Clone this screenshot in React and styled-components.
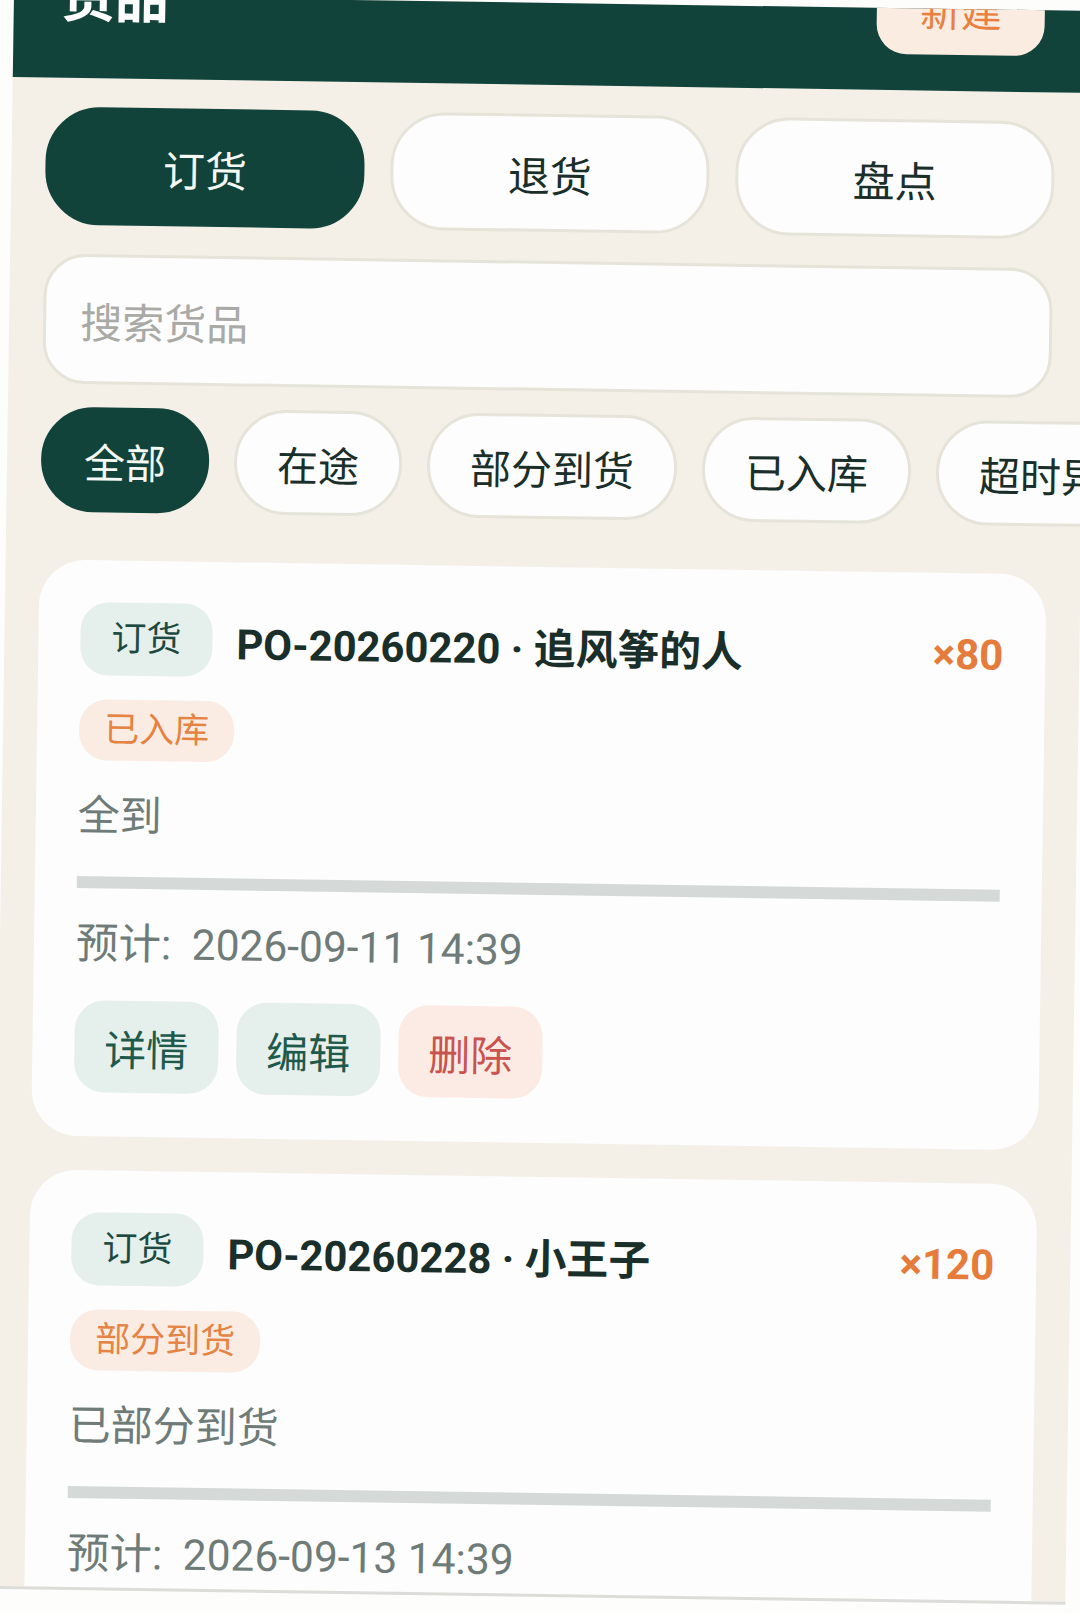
import styled, { createGlobalStyle } from "styled-components";

const GlobalStyle = createGlobalStyle`
  html, body {
    margin: 0;
    height: 100%;
    overflow: hidden;
    background: #fdfdfc;
  }
  * {
    box-sizing: border-box;
  }
`;

const Screen = styled.div`
  display: flex;
  flex-direction: column;
  width: 1075px;
  height: 1701px;
  margin: -5px 0 0 14px;
  background: #f4f0e8;
  color: #1a2e2a;
  font-family: Roboto, "Noto Sans CJK SC", sans-serif;
  transform: rotate(0.85deg);
  transform-origin: 0 0;
`;

const Header = styled.header`
  display: flex;
  flex: none;
  align-items: flex-end;
  height: 82px;
  padding: 0 44px 36px 47px;
  overflow: hidden;
  background: #11433a;
`;

const HeaderRow = styled.div`
  display: flex;
  flex: none;
  width: 100%;
  height: 92px;
  justify-content: space-between;
  align-items: center;
`;

const Title = styled.h1`
  margin: 0 0 6px;
  color: #fff;
  font-size: 54px;
  font-weight: 700;
`;

const NewButton = styled.button`
  width: 168px;
  height: 92px;
  border: none;
  border-radius: 30px;
  color: #e8803f;
  background: #fbece2;
  font: inherit;
  font-size: 41px;
`;

const Main = styled.main`
  display: flex;
  flex: 1;
  flex-direction: column;
  min-height: 0;
  padding: 29px 34px 0;
  overflow: hidden;
`;

const Tabs = styled.div`
  display: flex;
  flex: none;
  gap: 26px;
  margin-right: -2px;
`;

const Tab = styled.button`
  flex: 1;
  height: 118px;
  border: 3px solid ${({ $active }) => ($active ? "#11433a" : "#e6e3d9")};
  border-radius: 54px;
  color: ${({ $active }) => ($active ? "#f6f8f4" : "#1a2e2a")};
  background: ${({ $active }) => ($active ? "#11433a" : "#fcfdfc")};
  font: inherit;
  font-size: 42px;
`;

const Search = styled.div`
  display: flex;
  flex: none;
  align-items: center;
  height: 130px;
  margin: 29px -2px 0 0;
  padding-left: 34px;
  border: 3px solid #e6e3d9;
  border-radius: 42px;
  color: #a9a9a6;
  background: #fcfdfc;
  font-size: 42px;
`;

const Filters = styled.div`
  display: flex;
  flex: none;
  gap: 25px;
  margin-top: 23px;
`;

const Filter = styled.button`
  flex: none;
  height: 105px;
  padding: 0 40px;
  border: 3px solid ${({ $active }) => ($active ? "#11433a" : "#e6e3d9")};
  border-radius: 52px;
  color: ${({ $active }) => ($active ? "#f6f8f4" : "#1a2e2a")};
  background: ${({ $active }) => ($active ? "#11433a" : "#fcfdfc")};
  font: inherit;
  font-size: 41px;
  white-space: nowrap;
`;

const Cards = styled.div`
  display: flex;
  flex: none;
  flex-direction: column;
  gap: 34px;
  margin-top: 48px;
`;

const Card = styled.article`
  padding: 42px 42px 44px;
  border-radius: 46px;
  background: #fcfdfc;
`;

const CardTop = styled.div`
  display: flex;
  align-items: center;
  gap: 24px;
`;

const TypeBadge = styled.span`
  flex: none;
  height: 73px;
  padding: 0 31px;
  border-radius: 28px;
  color: #1d4a40;
  background: #e5efeb;
  font-size: 35px;
  line-height: 73px;
`;

const CardTitle = styled.div`
  flex: 1;
  font-size: 41.8px;
  font-weight: 700;
`;

const Qty = styled.div`
  padding-top: 5px;
  color: #e67c3b;
  font-size: 42px;
  font-weight: 700;
`;

const StatusPill = styled.span`
  display: inline-block;
  height: 61px;
  margin-top: 24px;
  padding: 0 25px;
  border-radius: 28px;
  color: #e58343;
  background: #fbece3;
  font-size: 35px;
  line-height: 61px;
`;

const Note = styled.div`
  margin-top: 26px;
  color: #6f7b78;
  font-size: 42px;
  line-height: 60px;
`;

const Progress = styled.div`
  height: 12px;
  margin-top: 30px;
  background: #d5dad8;
`;

const Eta = styled.div`
  margin-top: 26px;
  color: #6f7b78;
  font-size: 42.5px;
  line-height: 60px;
`;

const EtaLabel = styled.span`
  margin-right: 10px;
`;

const Actions = styled.div`
  display: flex;
  gap: 18px;
  margin-top: 26px;
`;

const ActionButton = styled.button`
  width: 144px;
  height: 92px;
  border: none;
  border-radius: 30px;
  color: ${({ $danger }) => ($danger ? "#c9534f" : "#1e5a4c")};
  background: ${({ $danger }) => ($danger ? "#fcebe5" : "#e5efeb")};
  font: inherit;
  font-size: 42px;
`;

const BottomBar = styled.div`
  flex: none;
  height: 110px;
  border-top: 3px solid #dcdcd8;
  background: #fdfdfc;
`;

const filters = ["全部", "在途", "部分到货", "已入库", "超时异常"];

const orders = [
  {
    id: "PO-20260220",
    name: "追风筝的人",
    qty: 80,
    status: "已入库",
    note: "全到",
    eta: "2026-09-11 14:39",
  },
  {
    id: "PO-20260228",
    name: "小王子",
    qty: 120,
    status: "部分到货",
    note: "已部分到货",
    eta: "2026-09-13 14:39",
  },
];

function OrderCard({ order }) {
  return (
    <Card>
      <CardTop>
        <TypeBadge>订货</TypeBadge>
        <CardTitle>
          {order.id} · {order.name}
        </CardTitle>
        <Qty>×{order.qty}</Qty>
      </CardTop>
      <StatusPill>{order.status}</StatusPill>
      <Note>{order.note}</Note>
      <Progress />
      <Eta>
        <EtaLabel>预计:</EtaLabel> {order.eta}
      </Eta>
      <Actions>
        <ActionButton>详情</ActionButton>
        <ActionButton>编辑</ActionButton>
        <ActionButton $danger>删除</ActionButton>
      </Actions>
    </Card>
  );
}

export default function App() {
  return (
    <>
      <GlobalStyle />
      <Screen>
        <Header>
          <HeaderRow>
            <Title>货品</Title>
            <NewButton>新建</NewButton>
          </HeaderRow>
        </Header>
        <Main>
          <Tabs>
            <Tab $active>订货</Tab>
            <Tab>退货</Tab>
            <Tab>盘点</Tab>
          </Tabs>
          <Search>搜索货品</Search>
          <Filters>
            {filters.map((label, index) => (
              <Filter key={label} $active={index === 0}>
                {label}
              </Filter>
            ))}
          </Filters>
          <Cards>
            {orders.map((order) => (
              <OrderCard key={order.id} order={order} />
            ))}
          </Cards>
        </Main>
        <BottomBar />
      </Screen>
    </>
  );
}
